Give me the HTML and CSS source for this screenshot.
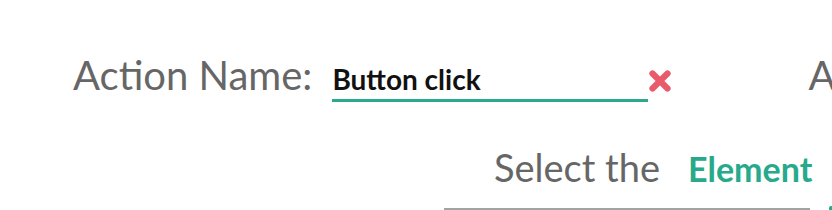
FILE: index.html
```html
<!DOCTYPE html>
<html>
<head>
<meta charset="utf-8">
<link rel="stylesheet" href="styles.css">
</head>
<body>
<div class="page">
  <div class="row-name">
    <span class="label">Action Name:</span>
    <div class="field">
      <span class="value">Button click</span>
    </div>
    <svg class="clear" viewBox="0 0 24 24" width="24" height="24">
      <path d="M4.5 4.5 L19.5 19.5 M19.5 4.5 L4.5 19.5" stroke="#e95a6b" stroke-width="6.2" stroke-linecap="round"/>
    </svg>
    <span class="label next">Action Type:</span>
  </div>
  <div class="row-select">
    <div class="select">
      <span class="prompt">Select the</span>
      <span class="pick">Element</span>
    </div>
    <div class="select-line"></div>
  </div>
  <div class="side-mark"></div>
</div>
</body>
</html>
```
FILE: styles.css
```css
html, body {
  margin: 0;
  padding: 0;
  background: #ffffff;
}
.page {
  position: relative;
  width: 832px;
  height: 210px;
  overflow: hidden;
  font-family: Lato, "Open Sans", sans-serif;
}
.row-name {
  display: flex;
  align-items: baseline;
  white-space: nowrap;
  padding-top: 51px;
  padding-left: 73px;
  height: 50px;
}
.label {
  flex: none;
  font-size: 40px;
  color: #666666;
  line-height: 48px;
}
.field {
  flex: none;
  margin-left: 20px;
  width: 316px;
  border-bottom: 3px solid #2aa98d;
  line-height: 31px;
}
.value {
  font-weight: 700;
  font-size: 28px;
  color: #111111;
}
.clear {
  flex: none;
  align-self: flex-start;
  margin-top: 18px;
  margin-left: 0;
}
.next {
  margin-left: 136px;
}
.row-select {
  margin-left: 444px;
  width: 366px;
  padding-top: 43px;
}
.select {
  display: flex;
  align-items: baseline;
  padding-left: 50px;
  white-space: nowrap;
}
.prompt {
  font-size: 38px;
  color: #666666;
  line-height: 46px;
}
.pick {
  margin-left: 28px;
  font-weight: 700;
  font-size: 34px;
  color: #27a98b;
}
.select-line {
  margin-top: 18px;
  height: 2px;
  background: #a3a3a3;
}
.side-mark {
  position: absolute;
  left: 829px;
  top: 206px;
  width: 3px;
  height: 4px;
  border-radius: 2px 0 0 0;
  background: #2aa98d;
}
```
